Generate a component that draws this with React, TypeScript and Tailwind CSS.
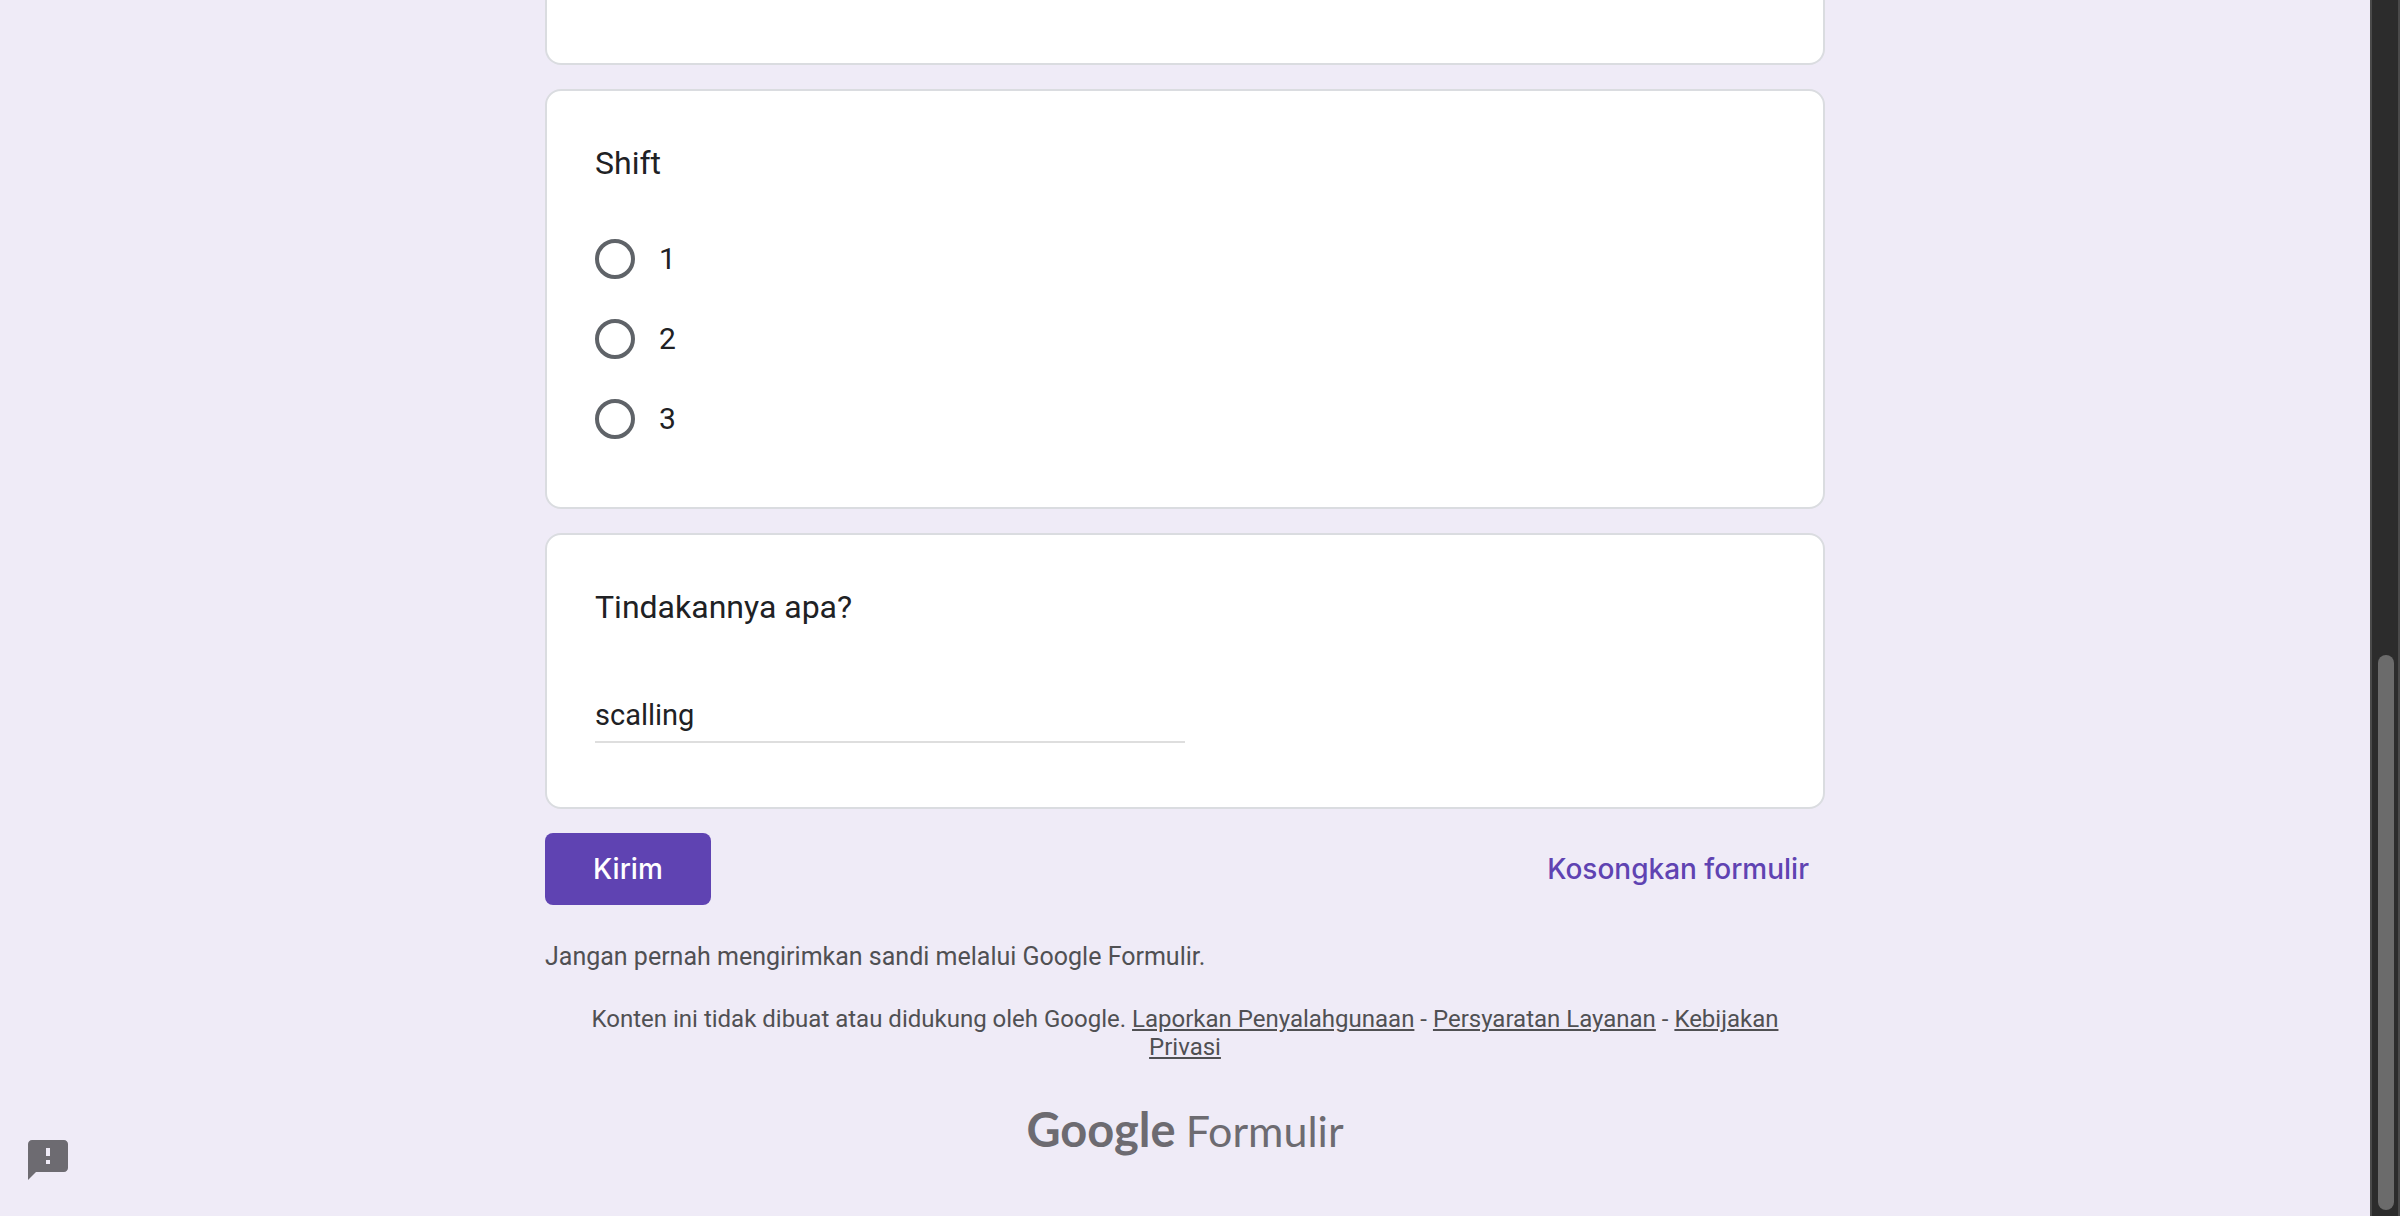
import { useState, type ReactNode } from "react";

const shifts = ["1", "2", "3"];

function Card({ children, className = "" }: { children?: ReactNode; className?: string }) {
  return (
    <section className={`rounded-2xl border-2 border-[#dadce0] bg-white px-12 pt-12 ${className}`}>
      {children}
    </section>
  );
}

function ShiftQuestion() {
  const [value, setValue] = useState("");
  return (
    <Card className="pb-[68px]">
      <fieldset>
        <legend className="text-[32px] leading-12">Shift</legend>
        <div className="mt-13 flex flex-col gap-10">
          {shifts.map((s) => (
            <label key={s} className="flex items-center gap-6 text-[30px] leading-10">
              <input
                type="radio"
                name="shift"
                value={s}
                checked={value === s}
                onChange={() => setValue(s)}
                className="size-10 appearance-none rounded-full border-4 border-[#5f6368] checked:border-[12px] checked:border-[#673ab7]"
              />
              {s}
            </label>
          ))}
        </div>
      </fieldset>
    </Card>
  );
}

function ActionQuestion() {
  return (
    <Card className="pb-16">
      <label htmlFor="tindakan" className="block text-[32px] leading-12">
        Tindakannya apa?
      </label>
      <input
        id="tindakan"
        type="text"
        defaultValue="scalling"
        className="mt-15 block h-13 w-1/2 border-b-2 border-[#dedede] bg-transparent pb-0.5 text-[29px] outline-none"
      />
    </Card>
  );
}

function Scrollbar() {
  return (
    <div className="flex w-[30px] shrink-0 flex-col border-x-2 border-[#4a4a4a] bg-[#2c2c2c] pr-1 pb-1.5 pl-1.5">
      <div className="grow-[655]" />
      <div className="grow-[555] rounded-full bg-[#6b6b6b]" />
    </div>
  );
}

export default function App() {
  return (
    <div className="flex min-h-screen bg-[#efebf7] font-[Roboto,sans-serif] text-[#202124]">
      <main className="min-w-0 flex-1">
        <div className="mx-auto max-w-[1280px]">
          <div className="flex flex-col gap-6">
            <div className="h-[65px] rounded-b-2xl border-2 border-t-0 border-[#dadce0] bg-white" />
            <ShiftQuestion />
            <ActionQuestion />
            <div className="flex items-center justify-between font-[Inter,sans-serif] text-[28px] font-medium">
              <button type="button" className="h-18 rounded-lg bg-[#5f43b2] px-12 text-white">
                Kirim
              </button>
              <button type="button" className="h-18 px-4 text-[#5f43b2]">
                Kosongkan formulir
              </button>
            </div>
          </div>
          <p className="mt-9 text-[25px] leading-8 text-[#505053]">
            Jangan pernah mengirimkan sandi melalui Google Formulir.
          </p>
          <footer className="px-11 text-center text-[#505053]">
            <p className="mt-8 text-[24px] leading-7">
              Konten ini tidak dibuat atau didukung oleh Google.{" "}
              <a href="#laporkan" className="underline">Laporkan Penyalahgunaan</a> -{" "}
              <a href="#persyaratan" className="underline">Persyaratan Layanan</a> -{" "}
              <a href="#privasi" className="underline">Kebijakan Privasi</a>
            </p>
            <a
              href="#formulir"
              className="mt-11 inline-flex items-baseline gap-2.5 font-[Lato,sans-serif] leading-12 text-[#6d6b71]"
            >
              <span className="text-[47px] font-bold">Google</span>
              <span className="text-[43px]">Formulir</span>
            </a>
          </footer>
        </div>
      </main>
      <Scrollbar />
      <button type="button" aria-label="Laporkan masalah" className="fixed bottom-9 left-7 size-10">
        <svg viewBox="2 2 20 20" className="size-10" fill="#6d6b71">
          <path d="M20 2H4c-1.100 0-1.990.9-1.990 2L2 22l4-4h14c1.100 0 2-.9 2-2V4c0-1.100-.9-2-2-2zm-7 12h-2v-2h2v2zm0-4h-2V6h2v4z" />
        </svg>
      </button>
    </div>
  );
}
